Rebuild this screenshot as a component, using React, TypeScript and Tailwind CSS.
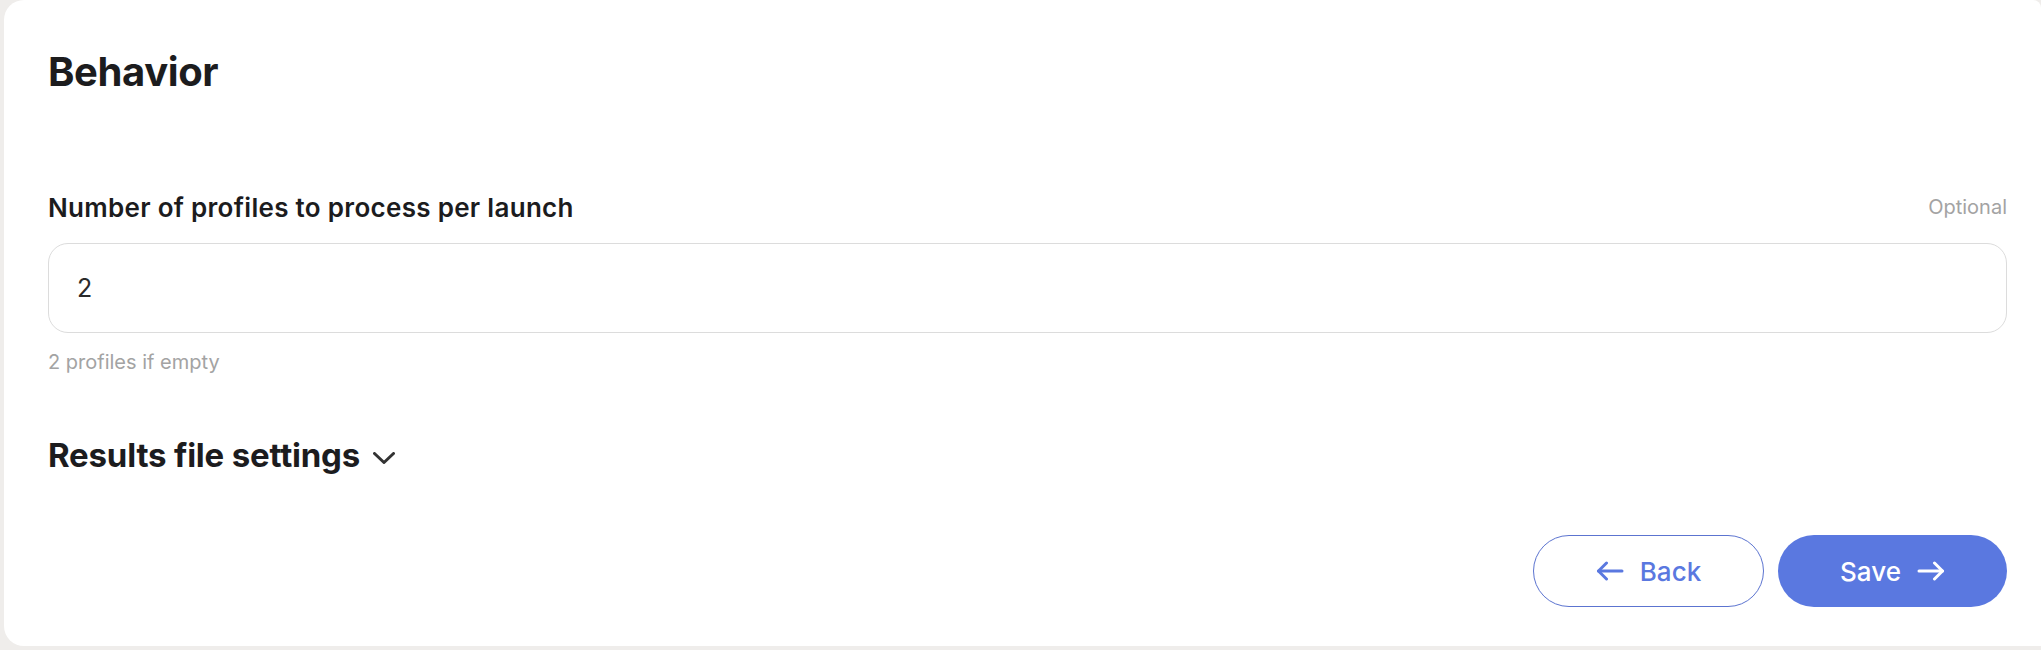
import { useState } from 'react';

const Arrow = ({ dir }: { dir: 'left' | 'right' }) => (
  <svg width="28" height="20" viewBox="0 0 28 20" fill="none" stroke="currentColor" strokeWidth="3" strokeLinecap="round" strokeLinejoin="round">
    {dir === 'left' ? (
      <>
        <path d="M26 10H2.5" />
        <path d="M10.5 2L2.5 10l8 8" />
      </>
    ) : (
      <>
        <path d="M2 10h23.5" />
        <path d="M17.5 2l8 8-8 8" />
      </>
    )}
  </svg>
);

const BehaviorSettings = () => {
  const [profiles, setProfiles] = useState('2');
  const [open, setOpen] = useState(false);

  return (
    <div className="h-[650px] bg-[#efedeb] pl-[4px] pb-[4px] font-['Inter',sans-serif] text-[#1c1c1e]">
      <div className="h-full bg-white rounded-l-[20px] rounded-tr-[8px] pl-[44px] pr-[34px] pt-[48px]">
        {/* Header */}
        <h1 className="text-[40px] leading-[48px] font-bold tracking-[-0.4px]">Behavior</h1>

        {/* Profiles per launch */}
        <div className="mt-[95px] flex items-center justify-between h-[32px]">
          <label className="text-[26px] font-semibold tracking-[0.3px]">
            Number of profiles to process per launch
          </label>
          <span className="text-[20px] text-[#a3a3a3]">Optional</span>
        </div>
        <input
          value={profiles}
          onChange={(e) => setProfiles(e.target.value)}
          className="mt-[20px] w-full h-[90px] rounded-[20px] border border-[#dcdcdc] px-[28px] text-[25px] text-[#2a2a2a] outline-none"
        />
        <p className="mt-[17px] text-[20px] leading-[24px] text-[#a3a3a3]">2 profiles if empty</p>

        {/* Results file settings */}
        <button
          onClick={() => setOpen(!open)}
          className="mt-[60px] flex items-center gap-[13px] h-[44px]"
        >
          <span className="text-[33px] font-bold tracking-[-0.2px]">Results file settings</span>
          <svg width="22" height="12" viewBox="0 0 22 12" fill="none" stroke="#333" strokeWidth="3" strokeLinecap="round" strokeLinejoin="round" className="mt-[4px]">
            <path d="M1.5 1.5L11 10.5l9.5-9" />
          </svg>
        </button>

        {/* Footer actions */}
        <div className="mt-[57px] flex justify-end gap-[14px]">
          <button className="w-[231px] h-[72px] rounded-full border border-[#5c74d0] text-[#5a78e0] flex items-center justify-center gap-[16px] text-[26px] font-medium">
            <Arrow dir="left" />
            Back
          </button>
          <button className="w-[229px] h-[72px] rounded-full bg-[#5a78e0] text-white flex items-center justify-center gap-[16px] text-[26px] font-medium">
            Save
            <Arrow dir="right" />
          </button>
        </div>
      </div>
    </div>
  );
};

export default function App() {
  return <BehaviorSettings />;
}
